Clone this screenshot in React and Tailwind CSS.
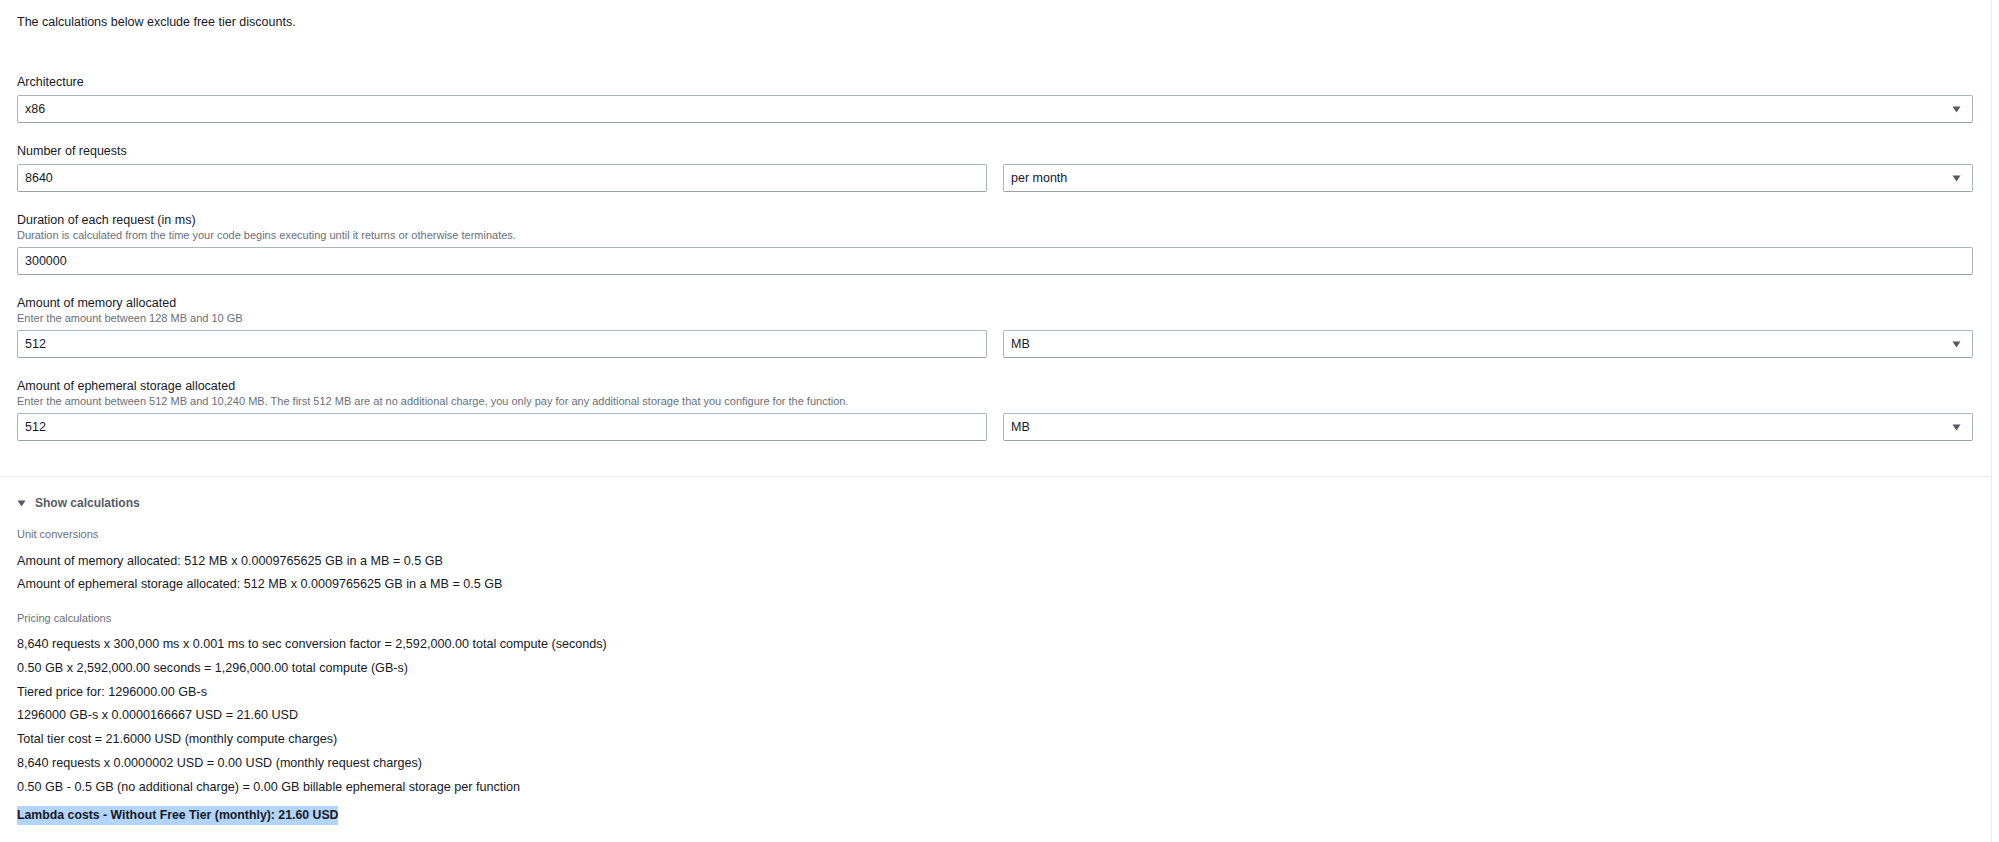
import React from "react";

function Caret() {
  return (
    <svg width="9" height="7" viewBox="0 0 9 7" className="shrink-0">
      <path d="M0.5 0.5 L8.5 0.5 L4.5 6.5 Z" fill="#545b64" />
    </svg>
  );
}

function Box({ value, select }) {
  return (
    <div className="h-[28px] border border-[#aab7b8] border-b-[#97a3a4] rounded-[2px] bg-white flex items-center justify-between pl-[7px] pr-[11px] text-[12.5px] text-[#16191f]">
      <span>{value}</span>
      {select ? <Caret /> : null}
    </div>
  );
}

function Field({ label, desc, children }) {
  return (
    <div className="mt-[20px]">
      <div className="text-[12.5px] leading-[16px] text-[#16191f]">{label}</div>
      {desc ? (
        <div className="text-[11px] leading-[13px] text-[#687078] mt-[1px]">{desc}</div>
      ) : null}
      <div className="mt-[5px]">{children}</div>
    </div>
  );
}

export default function App() {
  const pricing = [
    "8,640 requests x 300,000 ms x 0.001 ms to sec conversion factor = 2,592,000.00 total compute (seconds)",
    "0.50 GB x 2,592,000.00 seconds = 1,296,000.00 total compute (GB-s)",
    "Tiered price for: 1296000.00 GB-s",
    "1296000 GB-s x 0.0000166667 USD = 21.60 USD",
    "Total tier cost = 21.6000 USD (monthly compute charges)",
    "8,640 requests x 0.0000002 USD = 0.00 USD (monthly request charges)",
    "0.50 GB - 0.5 GB (no additional charge) = 0.00 GB billable ephemeral storage per function",
  ];
  return (
    <div className="w-[1999px] h-[842px] bg-white overflow-hidden font-['Liberation_Sans',Arial,sans-serif] text-[#16191f]">
      <div className="w-[1992px] h-[842px] border-r border-[#eaeded] flex flex-col">
        <div className="pl-[17px] pr-[18px] pt-[14px]">
          <div className="text-[12.5px] leading-[16px]">The calculations below exclude free tier discounts.</div>
          <div className="h-[24px]" />
          <Field label="Architecture">
            <Box value="x86" select />
          </Field>
          <Field label="Number of requests">
            <div className="grid grid-cols-2 gap-x-[16px]">
              <Box value="8640" />
              <Box value="per month" select />
            </div>
          </Field>
          <Field
            label="Duration of each request (in ms)"
            desc="Duration is calculated from the time your code begins executing until it returns or otherwise terminates."
          >
            <Box value="300000" />
          </Field>
          <Field label="Amount of memory allocated" desc="Enter the amount between 128 MB and 10 GB">
            <div className="grid grid-cols-2 gap-x-[16px]">
              <Box value="512" />
              <Box value="MB" select />
            </div>
          </Field>
          <Field
            label="Amount of ephemeral storage allocated"
            desc="Enter the amount between 512 MB and 10,240 MB. The first 512 MB are at no additional charge, you only pay for any additional storage that you configure for the function."
          >
            <div className="grid grid-cols-2 gap-x-[16px]">
              <Box value="512" />
              <Box value="MB" select />
            </div>
          </Field>
        </div>
        <div className="mt-[35px] border-t border-[#eaeded]" />
        <div className="pl-[17px] pt-[17px]">
          <div className="flex items-center gap-[9px] h-[18px]">
            <Caret />
            <span className="text-[12px] font-bold text-[#545b64]">Show calculations</span>
          </div>
          <div className="mt-[15px] text-[11px] leading-[14px] text-[#687078]">Unit conversions</div>
          <div className="mt-[9px] text-[12.6px] leading-[23px]">
            <div>Amount of memory allocated: 512 MB x 0.0009765625 GB in a MB = 0.5 GB</div>
            <div>Amount of ephemeral storage allocated: 512 MB x 0.0009765625 GB in a MB = 0.5 GB</div>
          </div>
          <div className="mt-[15px] text-[11px] leading-[14px] text-[#687078]">Pricing calculations</div>
          <div className="mt-[8px] text-[12.6px] leading-[23.8px]">
            {pricing.map((l) => (
              <div key={l}>{l}</div>
            ))}
          </div>
          <div className="mt-[6px] flex">
            <span className="bg-[#b3d4fc] text-[12.3px] font-bold leading-[19px]">
              Lambda costs - Without Free Tier (monthly): 21.60 USD
            </span>
          </div>
        </div>
      </div>
    </div>
  );
}
